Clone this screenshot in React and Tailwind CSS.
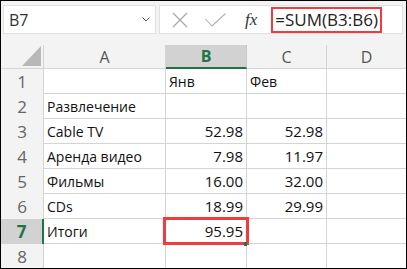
import React from "react";

const cols = [
  { key: "A", w: "w-[122px]" },
  { key: "B", w: "w-[81px]" },
  { key: "C", w: "w-[80px]" },
  { key: "D", w: "flex-1" },
];

const rows = [
  { n: 1, a: "", b: "Янв", c: "Фев", head: true },
  { n: 2, a: "Развлечение", b: "", c: "" },
  { n: 3, a: "Cable TV", b: "52.98", c: "52.98" },
  { n: 4, a: "Аренда видео", b: "7.98", c: "11.97" },
  { n: 5, a: "Фильмы", b: "16.00", c: "32.00" },
  { n: 6, a: "CDs", b: "18.99", c: "29.99" },
  { n: 7, a: "Итоги", b: "95.95", c: "" },
  { n: 8, a: "", b: "", c: "" },
];

function Cell({ w, children, right, last }) {
  return (
    <div
      className={`${w} h-full flex items-end pb-[1px] border-b border-[#d4d4d4] ${
        last ? "" : "border-r"
      } ${right ? "justify-end pr-[3px] text-[15px]" : "pl-[3px] text-[14px]"} text-[#111] whitespace-nowrap`}
    >
      {children}
    </div>
  );
}

export default function App() {
  return (
    <div
      className="w-[407px] h-[269px] border border-black bg-[#f3f3f3] overflow-hidden flex flex-col"
      style={{ fontFamily: '"Open Sans", "Liberation Sans", sans-serif' }}
    >
      {/* formula bar */}
      <div className="h-[44px] shrink-0 flex items-start pt-[4px] pl-[2px] gap-[3px]">
        <div className="w-[153px] h-[29px] bg-white border border-[#e1e1e1] flex items-center justify-between pl-[5px] pr-[5px]">
          <span className="text-[16px] text-[#333]">B7</span>
          <svg width="8" height="5" viewBox="0 0 8 5">
            <polyline points="0.5,0.5 4,4 7.5,0.5" fill="none" stroke="#555" strokeWidth="1" />
          </svg>
        </div>
        <div className="w-[244px] h-[29px] bg-white border border-[#e1e1e1] flex items-center">
          <svg className="ml-[12px]" width="16" height="16" viewBox="0 0 16 16">
            <path d="M1 1 L15 15 M15 1 L1 15" stroke="#a6a6a6" strokeWidth="1.2" fill="none" />
          </svg>
          <svg className="ml-[17px]" width="21" height="14" viewBox="0 0 21 14">
            <polyline points="0.5,6 7,13 20.5,0.5" fill="none" stroke="#b0b0b0" strokeWidth="1.1" />
          </svg>
          <span
            className="ml-[19px] text-[17px] italic text-[#333] leading-none"
            style={{ fontFamily: '"Liberation Serif", serif' }}
          >
            fx
          </span>
          <div className="ml-[14px] w-[111px] h-[26px] border-[2px] border-[#f03c3c] flex items-center pl-[2px] text-[17px] text-[#222] leading-none whitespace-nowrap">
            =SUM(B3:B6)
          </div>
        </div>
      </div>

      {/* grid */}
      <div className="relative flex-1 flex flex-col">
        <div className="h-[24px] shrink-0 flex">
          <div className="w-[43px] h-full border-r border-b border-[#d4d4d4] flex items-end justify-end pr-[2px] pb-[2px]">
            <svg width="19" height="20" viewBox="0 0 19 20">
              <polygon points="19,0 19,20 0,20" fill="#b8b8b8" />
            </svg>
          </div>
          {cols.map((c, i) =>
            c.key === "B" ? (
              <div
                key={c.key}
                className={`${c.w} h-full bg-[#d2d2d2] border-r border-[#c8c8c8] border-b-2 border-b-[#217346] flex items-center justify-center text-[16px] font-bold text-[#217346]`}
              >
                B
              </div>
            ) : (
              <div
                key={c.key}
                className={`${c.w} h-full border-b border-[#d4d4d4] ${
                  i < 3 ? "border-r" : ""
                } flex items-center justify-center text-[16px] text-[#555]`}
              >
                {c.key}
              </div>
            )
          )}
        </div>

        {rows.map((r) => (
          <div key={r.n} className="h-[25px] shrink-0 flex bg-white">
            {r.n === 7 ? (
              <div className="w-[43px] h-full bg-[#d2d2d2] border-r-2 border-[#217346] flex items-center justify-center text-[17px] font-bold text-[#217346]">
                {r.n}
              </div>
            ) : (
              <div className="w-[43px] h-full bg-[#f3f3f3] border-r border-[#d4d4d4] flex items-center justify-center text-[17px] text-[#666]">
                {r.n}
              </div>
            )}
            <Cell w="w-[122px]">{r.a}</Cell>
            <Cell w="w-[81px]" right={!r.head}>
              {r.head ? <span className="text-[14px]">{r.b}</span> : r.b}
            </Cell>
            <Cell w="w-[80px]" right={!r.head}>
              {r.head ? <span className="text-[14px]">{r.c}</span> : r.c}
            </Cell>
            <Cell w="flex-1" last />
          </div>
        ))}

        {/* selection */}
        <div className="absolute left-[162px] top-[172px] w-[86px] h-[28px] border-[3px] border-[#f03c3c]" />
        <div className="absolute left-[243px] top-[197px] w-[3px] h-[4px] bg-[#217346]" />
      </div>
    </div>
  );
}
